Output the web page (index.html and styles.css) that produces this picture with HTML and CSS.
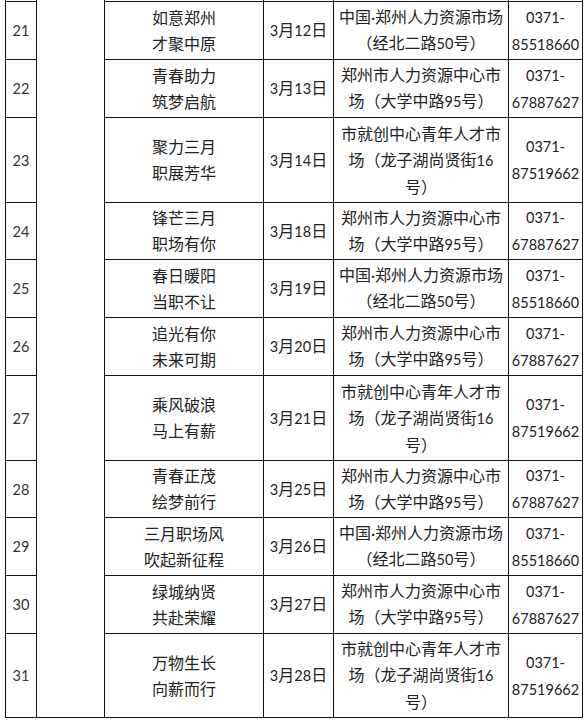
FILE: index.html
```html
<!DOCTYPE html>
<html lang="zh-CN">
<head>
<meta charset="utf-8">
<title>招聘会安排</title>
<link rel="stylesheet" href="styles.css">
</head>
<body>
<table class="sched">
  <colgroup>
    <col class="c-no"><col class="c-blank"><col class="c-name"><col class="c-date"><col class="c-place"><col class="c-tel">
  </colgroup>
  <tr class="stub"><td></td><td class="merged" rowspan="12"></td><td></td><td></td><td></td><td></td></tr>
  <tr class="h58"><td class="no"><span class="n">21</span></td><td>如意郑州<br>才聚中原</td><td><span class="n">3</span>月<span class="n">12</span>日</td><td>中国·郑州人力资源市场<br>（经北二路<span class="n">50</span>号）</td><td><span class="n">0371-<br>85518660</span></td></tr>
  <tr class="h58"><td class="no"><span class="n">22</span></td><td>青春助力<br>筑梦启航</td><td><span class="n">3</span>月<span class="n">13</span>日</td><td>郑州市人力资源中心市<br>场（大学中路<span class="n">95</span>号）</td><td><span class="n">0371-<br>67887627</span></td></tr>
  <tr class="h85"><td class="no"><span class="n">23</span></td><td>聚力三月<br>职展芳华</td><td><span class="n">3</span>月<span class="n">14</span>日</td><td>市就创中心青年人才市<br>场（龙子湖尚贤街<span class="n">16</span><br>号）</td><td><span class="n">0371-<br>87519662</span></td></tr>
  <tr class="h57"><td class="no"><span class="n">24</span></td><td>锋芒三月<br>职场有你</td><td><span class="n">3</span>月<span class="n">18</span>日</td><td>郑州市人力资源中心市<br>场（大学中路<span class="n">95</span>号）</td><td><span class="n">0371-<br>67887627</span></td></tr>
  <tr class="h58"><td class="no"><span class="n">25</span></td><td>春日暖阳<br>当职不让</td><td><span class="n">3</span>月<span class="n">19</span>日</td><td>中国·郑州人力资源市场<br>（经北二路<span class="n">50</span>号）</td><td><span class="n">0371-<br>85518660</span></td></tr>
  <tr class="h58"><td class="no"><span class="n">26</span></td><td>追光有你<br>未来可期</td><td><span class="n">3</span>月<span class="n">20</span>日</td><td>郑州市人力资源中心市<br>场（大学中路<span class="n">95</span>号）</td><td><span class="n">0371-<br>67887627</span></td></tr>
  <tr class="h85"><td class="no"><span class="n">27</span></td><td>乘风破浪<br>马上有薪</td><td><span class="n">3</span>月<span class="n">21</span>日</td><td>市就创中心青年人才市<br>场（龙子湖尚贤街<span class="n">16</span><br>号）</td><td><span class="n">0371-<br>87519662</span></td></tr>
  <tr class="h57"><td class="no"><span class="n">28</span></td><td>青春正茂<br>绘梦前行</td><td><span class="n">3</span>月<span class="n">25</span>日</td><td>郑州市人力资源中心市<br>场（大学中路<span class="n">95</span>号）</td><td><span class="n">0371-<br>67887627</span></td></tr>
  <tr class="h58"><td class="no"><span class="n">29</span></td><td>三月职场风<br>吹起新征程</td><td><span class="n">3</span>月<span class="n">26</span>日</td><td>中国·郑州人力资源市场<br>（经北二路<span class="n">50</span>号）</td><td><span class="n">0371-<br>85518660</span></td></tr>
  <tr class="h58"><td class="no"><span class="n">30</span></td><td>绿城纳贤<br>共赴荣耀</td><td><span class="n">3</span>月<span class="n">27</span>日</td><td>郑州市人力资源中心市<br>场（大学中路<span class="n">95</span>号）</td><td><span class="n">0371-<br>67887627</span></td></tr>
  <tr class="h84"><td class="no"><span class="n">31</span></td><td>万物生长<br>向薪而行</td><td><span class="n">3</span>月<span class="n">28</span>日</td><td>市就创中心青年人才市<br>场（龙子湖尚贤街<span class="n">16</span><br>号）</td><td><span class="n">0371-<br>87519662</span></td></tr>
</table>
</body>
</html>
```

FILE: styles.css
```css
html, body {
  margin: 0;
  padding: 0;
  background: #fff;
}

.sched {
  margin-left: 5px;
  border-collapse: collapse;
  table-layout: fixed;
  width: 577px;
  font-family: Lato, "Noto Sans CJK SC", sans-serif;
  font-size: 16px;
  line-height: 26px;
  color: #222;
}

.c-no { width: 31px; }
.c-blank { width: 68px; }
.c-name { width: 159px; }
.c-date { width: 70px; }
.c-place { width: 175px; }
.c-tel { width: 74px; }

.sched td {
  border: 1.5px solid #111;
  padding: 0;
  text-align: center;
  vertical-align: middle;
  white-space: nowrap;
  overflow: hidden;
}

.stub td {
  height: 1px;
  border-top: none;
  line-height: 0;
  font-size: 0;
}

.h57 { height: 57px; }
.h58 { height: 58px; }
.h84 { height: 84px; }
.h85 { height: 85px; }

.n {
  font-size: 14.5px;
}

.no {
  color: #333;
}
```
